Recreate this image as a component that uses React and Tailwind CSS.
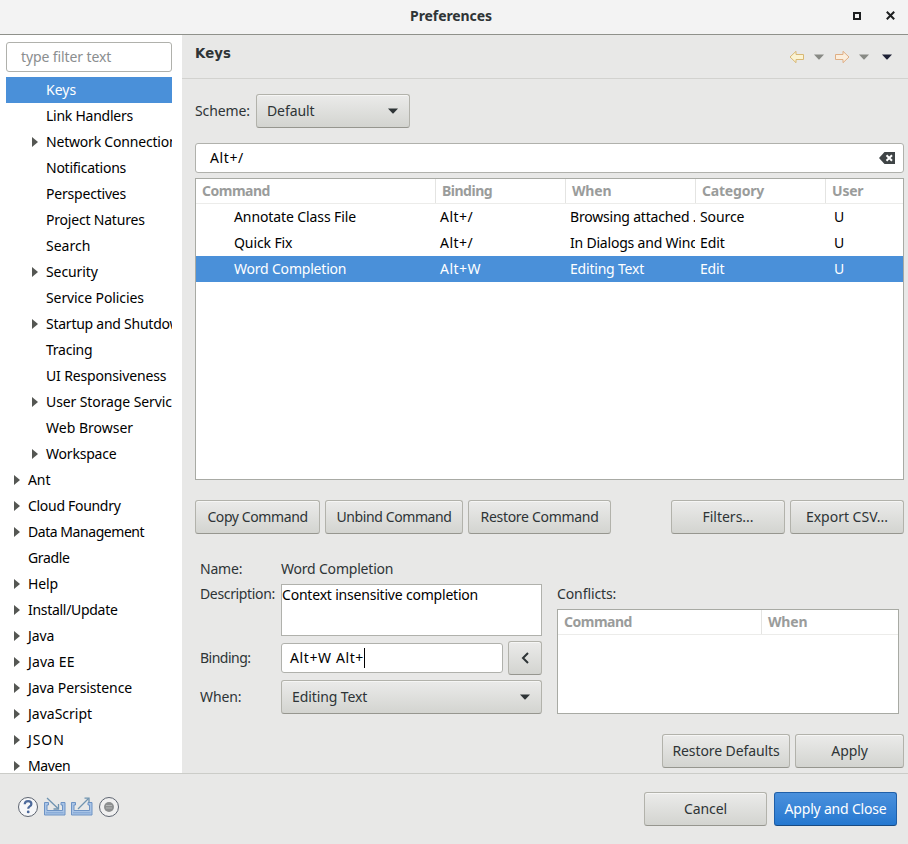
const tree = [
    { label: "Keys", level: 2, selected: true, tracking: "tracking-normal" },
    { label: "Link Handlers", level: 2, tracking: "tracking-[-0.25px]" },
    { label: "Network Connections", level: 2, arrow: true, tracking: "tracking-[-0.2px]" },
    { label: "Notifications", level: 2, tracking: "tracking-[-0.25px]" },
    { label: "Perspectives", level: 2, tracking: "tracking-[-0.2px]" },
    { label: "Project Natures", level: 2, tracking: "tracking-[-0.2px]" },
    { label: "Search", level: 2, tracking: "tracking-normal" },
    { label: "Security", level: 2, arrow: true },
    { label: "Service Policies", level: 2 },
    { label: "Startup and Shutdown", level: 2, arrow: true, tracking: "tracking-[-0.25px]" },
    { label: "Tracing", level: 2, tracking: "tracking-[-0.25px]" },
    { label: "UI Responsiveness", level: 2, tracking: "tracking-[-0.15px]" },
    { label: "User Storage Service", level: 2, arrow: true },
    { label: "Web Browser", level: 2, tracking: "tracking-normal" },
    { label: "Workspace", level: 2, arrow: true, tracking: "tracking-[-0.2px]" },
    { label: "Ant", level: 1, arrow: true },
    { label: "Cloud Foundry", level: 1, arrow: true, tracking: "tracking-[-0.3px]" },
    { label: "Data Management", level: 1, arrow: true, tracking: "tracking-[-0.45px]" },
    { label: "Gradle", level: 1, tracking: "tracking-[-0.35px]" },
    { label: "Help", level: 1, arrow: true },
    { label: "Install/Update", level: 1, arrow: true, tracking: "tracking-[-0.3px]" },
    { label: "Java", level: 1, arrow: true },
    { label: "Java EE", level: 1, arrow: true, tracking: "tracking-[0.1px]" },
    { label: "Java Persistence", level: 1, arrow: true },
    { label: "JavaScript", level: 1, arrow: true, tracking: "tracking-normal" },
    { label: "JSON", level: 1, arrow: true, tracking: "tracking-[0.9px]" },
    { label: "Maven", level: 1, arrow: true, tracking: "tracking-[-0.4px]" },
];

const commands = [
    ["Annotate Class File", "Alt+/", "Browsing attached ...", "Source", "U"],
    ["Quick Fix", "Alt+/", "In Dialogs and Windows", "Edit", "U"],
    ["Word Completion", "Alt+W", "Editing Text", "Edit", "U"],
];

function Button({ children, className }) {
    return (
        <button
            className={`h-[34px] shrink-0 rounded-[3px] border border-[#b2b2ab] border-b-[#96968f] bg-linear-to-b from-[#ebebea] to-[#d3d4d0] text-center whitespace-nowrap shadow-[inset_0_1px_0_#f6f6f5] ${className}`}
        >
            {children}
        </button>
    );
}

function Caret({ className }) {
    return (
        <svg width="10" height="6" viewBox="0 0 10 6" className={className}>
            <path d="M0 .5h10L5.6 5.3q-.6.5-1.2 0z" fill="currentColor" />
        </svg>
    );
}

function Select({ children, className }) {
    return (
        <Button className={`flex items-center justify-between pr-[11px] pl-2.5 ${className}`}>
            <span>{children}</span>
            <Caret />
        </Button>
    );
}

function Arrow({ flip }) {
    return (
        <svg width="16" height="14" viewBox="0 0 16 14" className={flip ? "-scale-x-100" : ""}>
            <path
                d="M1 7l6-5.700V4.500h7.500v5H7v3.200z"
                fill={flip ? "#fbeedd" : "#fbf3d2"}
                stroke={flip ? "#dfae84" : "#d8b875"}
                strokeLinejoin="round"
            />
        </svg>
    );
}

function TreeItem({ item }) {
    return (
        <div
            className={`flex h-[26px] items-center overflow-hidden whitespace-nowrap ${
                item.level === 2 ? "pl-[26px]" : "pl-2"
            } ${item.selected ? "bg-[#4a90d9] text-white" : "text-black"}`}
        >
            <svg width="6" height="10" viewBox="0 0 6 10" className="mr-2 shrink-0">
                {item.arrow && <path d="M0 0l6 5-6 5z" fill="#555753" />}
            </svg>
            <span className={item.tracking}>{item.label}</span>
        </div>
    );
}

function Tray({ out }) {
    return (
        <svg width="23" height="20" viewBox="0 0 23 20">
            <path
                d="M1.500 5.500h4v2.500H4v5.500h15.500V8H18V5.500h4v12.500H1.500z"
                fill="#a9c4e6"
                stroke="#6d93c5"
            />
            <path d="M3 15.800h17.500" stroke="#7ea3d3" />
            {out ? (
                <g stroke="#6f93b0" strokeWidth="1.300" fill="none">
                    <path d="M8 12L18.500 1.500" />
                    <path d="M14.500 1.200h4.500v4.500" />
                </g>
            ) : (
                <g stroke="#6f93b0" strokeWidth="1.300" fill="none">
                    <path d="M4 1l11 10.500" />
                    <path d="M15.500 7v5H10.500" />
                </g>
            )}
        </svg>
    );
}

export default function App() {
    return (
        <div className="flex h-[844px] w-[908px] flex-col overflow-hidden bg-[#e8e8e7] [font-family:'Noto_Sans',sans-serif] text-[14px] leading-[20px] tracking-[-0.1px] text-[#2e3436]">
            {/* Title bar */}
            <div className="flex h-[35px] shrink-0 items-center border-b border-[#8f918b] bg-[#f3f3f3] pb-[3px]">
                <div className="w-[70px]" />
                <div className="flex-1 pr-[6px] text-center font-bold">
                    <span>Preferences</span>
                </div>
                <div className="flex w-[70px] items-center gap-[25px] pl-[15px]">
                    <div className="size-2 border-2 border-[#1d1f20]" />
                    <svg width="9" height="9" viewBox="0 0 9 9">
                        <path d="M.8.8l7.400 7.400M8.200.8L.8 8.200" stroke="#1d1f20" strokeWidth="2" />
                    </svg>
                </div>
            </div>

            <div className="flex h-[738px] shrink-0">
                {/* Page tree */}
                <div className="flex w-[182px] shrink-0 flex-col overflow-hidden bg-white pr-2.5 pl-1.5">
                    <div className="mt-[7px] mb-[5px] flex h-[30px] shrink-0 items-center rounded-[3px] border border-[#b0b1ac] pl-3.5 text-[#8b8e8f]">
                        <span>type filter text</span>
                    </div>
                    <div className="h-[696px] overflow-hidden">
                        {tree.map((item) => (
                            <TreeItem key={item.label} item={item} />
                        ))}
                    </div>
                </div>

                {/* Keys page */}
                <div className="flex flex-1 flex-col">
                    <div className="flex h-11 shrink-0 items-center border-b border-[#d2d2cf] pr-4 pl-[13px]">
                        <h1 className="flex-1 pb-1.5 [font-family:'DejaVu_Sans',sans-serif] text-[13.3px] font-bold tracking-[0.1px]">
                            Keys
                        </h1>
                        <Arrow />
                        <Caret className="mr-[10px] ml-[9px] text-[#888a85]" />
                        <Arrow flip />
                        <Caret className="mr-[13px] ml-[9px] text-[#888a85]" />
                        <Caret className="text-[#1d2035]" />
                    </div>

                    <div className="flex flex-col pt-[15px] pr-1 pl-[13px]">
                        <div className="flex items-center">
                            <div className="w-[61px]">
                                <span>Scheme:</span>
                            </div>
                            <Select className="w-[154px]">Default</Select>
                        </div>

                        <div className="mt-[15px] flex h-[30px] items-center rounded-[3px] border border-[#b0b1ac] bg-white pr-2 pl-3.5 text-black">
                            <span className="flex-1 tracking-[0.6px]">Alt+/</span>
                            <svg width="16" height="12" viewBox="0 0 16 12">
                                <path d="M0 6l5.500-6H16v12H5.500z" fill="#3f4446" />
                                <path d="M7.500 3.200l5.500 5.600M13 3.200L7.500 8.800" stroke="#fff" strokeWidth="2" />
                            </svg>
                        </div>

                        {/* Command list */}
                        <div className="mt-[5px] h-[302px] border border-[#a8aaa4] bg-white">
                            <div className="grid h-[25px] grid-cols-[240px_130px_130px_130px_1fr] border-b border-[#ececea] font-bold tracking-[-0.5px] text-[#9a9c9b]">
                                {["Command", "Binding", "When", "Category", "User"].map((name) => (
                                    <div key={name} className="flex items-center border-r border-[#e4e4e2] pl-1.5 last:border-r-0">
                                        <span className={name === "Command" || name === "Binding" ? "" : "tracking-[-0.2px]"}>
                                            {name}
                                        </span>
                                    </div>
                                ))}
                            </div>
                            {commands.map((row) => (
                                <div
                                    key={row[0]}
                                    className={`grid h-[26px] grid-cols-[240px_130px_130px_130px_1fr] items-center whitespace-nowrap ${
                                        row[0] === "Word Completion" ? "bg-[#4a90d9] tracking-[-0.2px] text-white" : "text-black"
                                    }`}
                                >
                                    <div className="pl-[38px]">{row[0]}</div>
                                    <div className="pl-1 tracking-[0.5px]">{row[1]}</div>
                                    <div className="ml-1 w-[125px] overflow-hidden tracking-[-0.2px]">{row[2]}</div>
                                    <div className="pl-1">{row[3]}</div>
                                    <div className="pl-2">{row[4]}</div>
                                </div>
                            ))}
                        </div>

                        <div className="mt-5 flex gap-[5px] tracking-[-0.4px]">
                            <Button className="w-[125px]">Copy Command</Button>
                            <Button className="w-[138px]">Unbind Command</Button>
                            <Button className="w-[143px] tracking-[-0.3px]">Restore Command</Button>
                            <div className="flex-1" />
                            <Button className="w-[114px] tracking-normal">Filters...</Button>
                            <Button className="w-[114px] tracking-normal">Export CSV...</Button>
                        </div>

                        {/* Selected binding */}
                        <div className="mt-[25px] flex pr-[5px] pl-[5px]">
                            <div className="w-[342px]">
                                <div className="flex h-5 tracking-[-0.2px]">
                                    <div className="w-[81px]">Name:</div>
                                    <span>Word Completion</span>
                                </div>
                                <div className="mt-[5px] flex">
                                    <div className="w-[81px] tracking-[-0.35px] whitespace-nowrap">Description:</div>
                                    <div className="h-[52px] flex-1 border border-[#b0b1ac] bg-white tracking-[-0.2px] text-black">
                                        <span>Context insensitive completion</span>
                                    </div>
                                </div>
                                <div className="mt-[5px] flex items-center">
                                    <div className="w-[81px] tracking-[-0.5px]">Binding:</div>
                                    <div className="flex h-[30px] w-[222px] items-center rounded-[3px] border border-[#b0b1ac] bg-white pl-2 text-black">
                                        <span className="tracking-[0.6px]">Alt+W Alt+</span>
                                        <div className="h-5 w-px bg-black" />
                                    </div>
                                    <Button className="ml-[5px] flex w-[34px] items-center justify-center">
                                        <svg width="8" height="12" viewBox="0 0 8 12">
                                            <path d="M7 1L2 6l5 5" fill="none" stroke="#2e3436" strokeWidth="2" />
                                        </svg>
                                    </Button>
                                </div>
                                <div className="mt-[5px] flex items-center">
                                    <div className="w-[81px]">When:</div>
                                    <Select className="w-[261px]">Editing Text</Select>
                                </div>
                            </div>

                            <div className="ml-[15px] flex-1 pt-[25px]">
                                <span className="block">Conflicts:</span>
                                <div className="mt-[5px] h-[105px] border border-[#a8aaa4] bg-white">
                                    <div className="grid h-[25px] grid-cols-[204px_1fr] border-b border-[#ececea] font-bold tracking-[-0.5px] text-[#9a9c9b]">
                                        <div className="flex items-center border-r border-[#e4e4e2] pl-1.5">Command</div>
                                        <div className="flex items-center pl-1.5 tracking-[-0.2px]">When</div>
                                    </div>
                                </div>
                            </div>
                        </div>

                        <div className="mt-5 flex justify-end gap-[5px]">
                            <Button className="w-[128px]">Restore Defaults</Button>
                            <Button className="w-[109px]">Apply</Button>
                        </div>
                    </div>
                </div>
            </div>

            {/* Footer */}
            <div className="flex flex-1 items-start border-t border-[#cbccc8] pt-[18px] pr-[11px] pl-[17px]">
                <div className="flex flex-1 items-center gap-1 pt-1">
                    <svg width="22" height="22" viewBox="0 0 22 22">
                        <circle cx="11" cy="11" r="9.500" fill="#f6f7f9" stroke="#5d6470" />
                        <path
                            d="M7.700 8.300q.2-3.200 3.400-3.200 3.300 0 3.300 2.800 0 1.500-1.700 2.500-1.500.9-1.500 2.300"
                            fill="none"
                            stroke="#4d6a9b"
                            strokeWidth="2.200"
                        />
                        <circle cx="11.200" cy="15.900" r="1.400" fill="#4d6a9b" />
                    </svg>
                    <Tray />
                    <Tray out />
                    <svg width="22" height="22" viewBox="0 0 22 22" className="ml-px">
                        <circle cx="11" cy="11" r="9.500" fill="#f0f0f0" stroke="#5d6470" />
                        <circle cx="11" cy="11" r="5" fill="#8d8f90" />
                        <path d="M8 9.500h6M8 12h6" stroke="#b4b6b6" />
                    </svg>
                </div>
                <Button className="w-[123px]">Cancel</Button>
                <button className="ml-[7px] h-[34px] w-[123px] rounded-[3px] border border-[#1f5fa8] border-b-[#184a82] bg-linear-to-b from-[#4a90dc] to-[#2478d0] tracking-[-0.2px] whitespace-nowrap text-white">
                    Apply and Close
                </button>
            </div>
        </div>
    );
}
